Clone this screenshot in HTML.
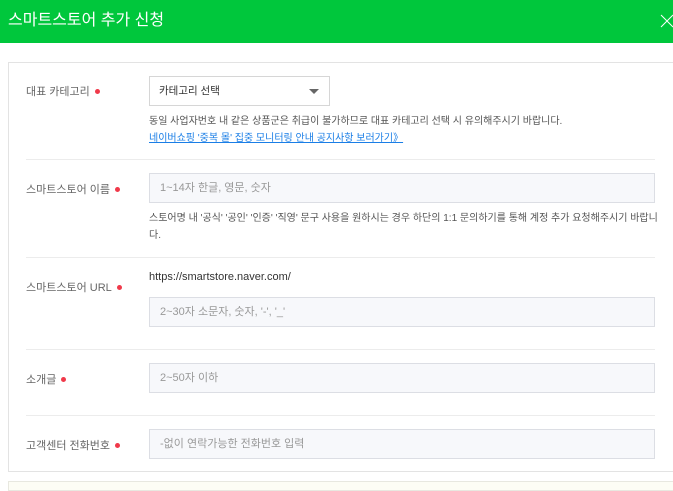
<!DOCTYPE html>
<html><head><meta charset="utf-8"><style>
*{margin:0;padding:0;box-sizing:border-box}
body{width:673px;height:485px;overflow:hidden;background:#fff;font-family:"Liberation Sans","Noto Sans CJK KR",sans-serif;position:relative;color:#333}
.hd{position:absolute;left:0;top:0;width:673px;height:43px;background:#00c73c;color:#fff;font-size:16px;line-height:42px;padding-left:8px}
.x{position:absolute;right:-2px;top:13px;width:16px;height:16px}
.box{position:absolute;left:8px;top:62px;width:680px;height:410px;border:1px solid #e3e3e3}
.box2{position:absolute;left:8px;top:481px;width:680px;height:10px;border:1px solid #e8e8e0;background:#fdfdf5}
.lb{position:absolute;left:26px;font-size:11px;color:#666}
.lb i{display:inline-block;width:5px;height:5px;border-radius:50%;background:#f0394a;margin-left:5px;vertical-align:1px}
.in{position:absolute;left:149px;width:506px;height:30px;background:#f7f8fb;border:1px solid #dcdee4;font-size:11px;color:#999;line-height:28px;padding-left:10px}
.sep{position:absolute;left:26px;width:629px;height:1px;background:#ececec}
.t{position:absolute;left:149px;font-size:10px;color:#555;line-height:17px}
</style></head><body>
<div class="hd">스마트스토어 추가 신청</div>
<svg class="x" viewBox="0 0 16 16"><path d="M2 2L14 14M14 2L2 14" stroke="#fff" stroke-width="1"/></svg>
<div class="box"></div>
<div class="box2"></div>
<div class="lb" style="top:83px">대표 카테고리<i></i></div>
<div style="position:absolute;left:149px;top:76px;width:181px;height:30px;border:1px solid #d6d6d6;font-size:10.5px;line-height:28px;padding-left:9px;color:#333">카테고리 선택<span style="position:absolute;right:10px;top:12px;width:0;height:0;border-left:5px solid transparent;border-right:5px solid transparent;border-top:5px solid #666"></span></div>
<div class="t" style="top:113px">동일 사업자번호 내 같은 상품군은 취급이 불가하므로 대표 카테고리 선택 시 유의해주시기 바랍니다.<br><span style="color:#1a7ee6;text-decoration:underline">네이버쇼핑 '중복 몰' 집중 모니터링 안내 공지사항 보러가기》</span></div>
<div class="sep" style="top:159px"></div>
<div class="lb" style="top:181px">스마트스토어 이름<i></i></div>
<div class="in" style="top:173px">1~14자 한글, 영문, 숫자</div>
<div class="t" style="top:210px;width:510px">스토어명 내 '공식' '공인' '인증' '직영' 문구 사용을 원하시는 경우 하단의 1:1 문의하기를 통해 계정 추가 요청해주시기 바랍니다.</div>
<div class="sep" style="top:257px"></div>
<div class="lb" style="top:279px">스마트스토어 URL<i></i></div>
<div style="position:absolute;left:149px;top:271px;font-size:11px;color:#333">https://smartstore.naver.com/</div>
<div class="in" style="top:297px">2~30자 소문자, 숫자, '-', '_'</div>
<div class="sep" style="top:349px"></div>
<div class="lb" style="top:371px">소개글<i></i></div>
<div class="in" style="top:363px">2~50자 이하</div>
<div class="sep" style="top:415px"></div>
<div class="lb" style="top:437px">고객센터 전화번호<i></i></div>
<div class="in" style="top:429px">-없이 연락가능한 전화번호 입력</div>
</body></html>
